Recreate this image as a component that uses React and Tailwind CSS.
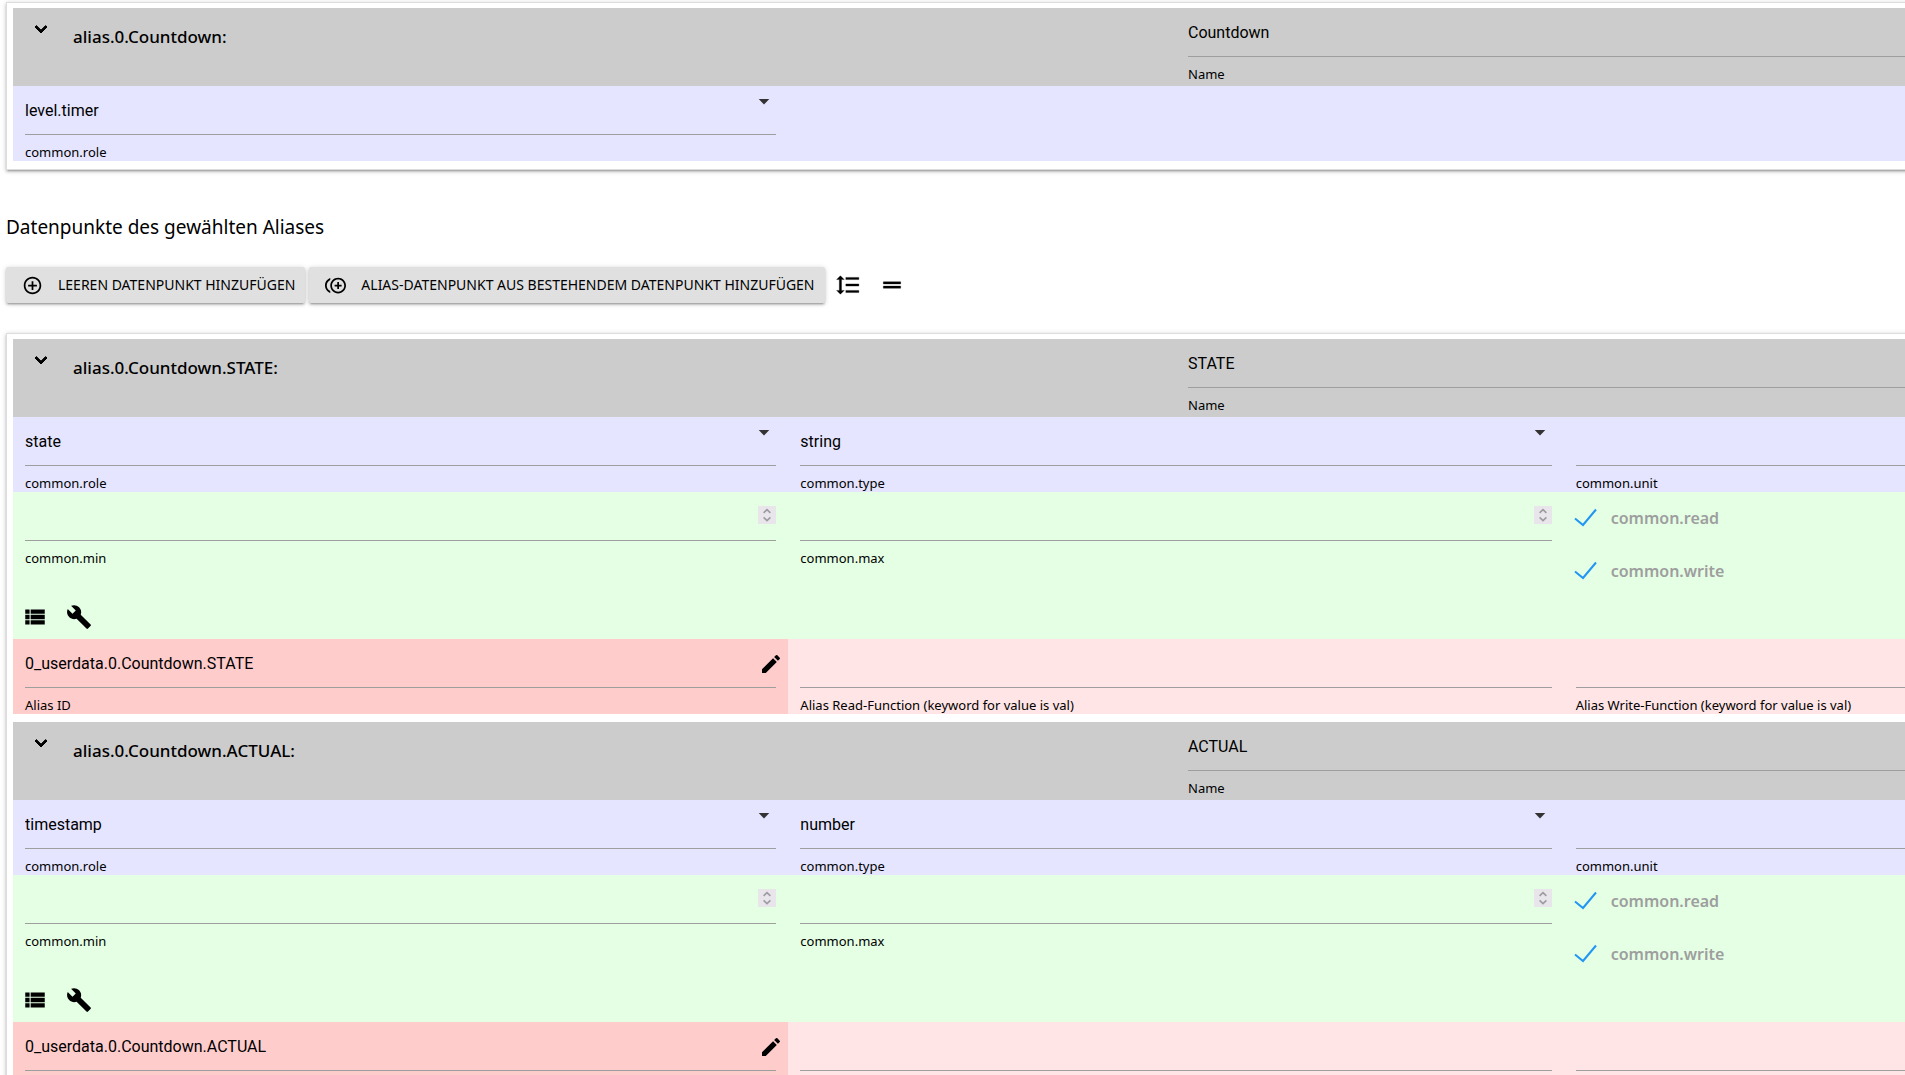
import { useId, useState } from 'react';
import {
  MdAddCircleOutline,
  MdBuild,
  MdControlPointDuplicate,
  MdEdit,
  MdViewList,
} from 'react-icons/md';

const datapoints = [
  { id: 'alias.0.Countdown.STATE', name: 'STATE', role: 'state', type: 'string', aliasId: '0_userdata.0.Countdown.STATE' },
  { id: 'alias.0.Countdown.ACTUAL', name: 'ACTUAL', role: 'timestamp', type: 'number', aliasId: '0_userdata.0.Countdown.ACTUAL' },
];

// Material icons with a heavier outline than the icon package has
const BoldIcon = ({ d, size, weight = 0.8, className }) => (
  <svg
    className={className}
    width={size}
    height={size}
    viewBox="0 0 24 24"
    fill="currentColor"
    stroke="currentColor"
    strokeWidth={weight}
  >
    <path d={d} />
  </svg>
);

const EXPAND_MORE = 'M16.59 8.59 12 13.17 7.41 8.59 6 10l6 6 6-6z';
const LINE_SPACING = 'M6 7h2.5L5 3.5 1.5 7H4v10H1.5L5 20.5 8.5 17H6V7zm4-2v2h12V5H10zm0 14h12v-2H10v2zm0-6h12v-2H10v2z';
const DRAG_HANDLE = 'M20 9H4v2h16V9zM4 15h16v-2H4v2z';

const Field = ({ label, children }) => {
  const id = useId();
  return (
    <div className="px-3">
      <div className="relative">{children(id)}</div>
      <label htmlFor={id} className="block pt-2 text-[13px] leading-[18px] whitespace-nowrap">
        {label}
      </label>
    </div>
  );
};

const inputClass =
  'block h-[49px] w-full appearance-none border-b border-[#9e9e9e] bg-transparent font-[Roboto,sans-serif] text-base outline-none';

const TextField = ({ label, value = '' }) => (
  <Field label={label}>{(id) => <input id={id} type="text" defaultValue={value} className={inputClass} />}</Field>
);

const SelectField = ({ label, value }) => (
  <Field label={label}>
    {(id) => (
      <>
        <select id={id} defaultValue={value} className={`${inputClass} pt-px`}>
          <option>{value}</option>
        </select>
        <svg className="pointer-events-none absolute top-[3px] right-0" width="24" height="24" viewBox="0 0 24 24" fill="#333">
          <path d="M6.7 10h10.6L12 15.5z" />
        </svg>
      </>
    )}
  </Field>
);

const NumberField = ({ label }) => (
  <Field label={label}>
    {(id) => (
      <>
        <input id={id} type="number" className={`${inputClass} [appearance:textfield]`} />
        <svg
          className="pointer-events-none absolute top-3.5 right-0 bg-[#e8e6eb]"
          width="18"
          height="18"
          viewBox="0 0 18 18"
          fill="none"
          stroke="#9d9aa3"
          strokeWidth="1.6"
        >
          <path d="M5.6 6.8 9 3.6l3.4 3.2M5.6 11.4 9 14.6l3.4-3.2" />
        </svg>
      </>
    )}
  </Field>
);

const CheckField = ({ label }) => (
  <label className="flex h-[53px] items-start gap-3 px-2.5 pt-3.5 text-base leading-6 font-semibold text-[#9e9e9e]">
    <span className="relative flex h-6 w-[25px] items-center">
      <input type="checkbox" defaultChecked className="peer h-6 w-full appearance-none outline-none" />
      <svg
        className="pointer-events-none absolute inset-0 hidden peer-checked:block"
        width="25"
        height="24"
        viewBox="0 0 25 24"
        fill="none"
        stroke="#2196f3"
        strokeWidth="2"
      >
        <path d="M1 12.5 9 19 22 3.5" />
      </svg>
    </span>
    {label}
  </label>
);

const ItemHeader = ({ id, name, open, onToggle }) => (
  <div className="grid grid-cols-2 bg-[#cccccc] pb-[3px]">
    <div className="flex items-start gap-5">
      <button type="button" onClick={onToggle} aria-label="Toggle" className="mt-[9px] ml-4">
        <BoldIcon d={EXPAND_MORE} size={24} weight={1} className={open ? '' : '-rotate-90'} />
      </button>
      <span className="pt-[17px] text-[17px] leading-6 font-medium">{id}:</span>
    </div>
    <TextField label="Name" value={name} />
  </div>
);

const Datapoint = ({ id, name, role, type, aliasId }) => {
  const [open, setOpen] = useState(true);
  return (
    <div className="mb-2">
      <ItemHeader id={id} name={name} open={open} onToggle={() => setOpen(!open)} />
      {open && (
        <>
          <div className="grid grid-cols-3 bg-[#e5e5ff]">
            <SelectField label="common.role" value={role} />
            <SelectField label="common.type" value={type} />
            <TextField label="common.unit" />
          </div>
          <div className="bg-[#e5ffe5] pb-[9px]">
            <div className="grid grid-cols-3">
              <NumberField label="common.min" />
              <NumberField label="common.max" />
              <div>
                <CheckField label="common.read" />
                <CheckField label="common.write" />
              </div>
            </div>
            <div className="flex gap-[18px] px-[9px] pt-1.5">
              <button type="button" aria-label="Edit states">
                <MdViewList size={26} />
              </button>
              <button type="button" aria-label="Edit custom settings">
                <MdBuild size={26} />
              </button>
            </div>
          </div>
          <div className="grid grid-cols-3 bg-[#ffe5e5]">
            <div className="relative bg-[#ffcccc]">
              <TextField label="Alias ID" value={aliasId} />
              <button type="button" aria-label="Edit alias id" className="absolute top-[13px] right-[5px]">
                <MdEdit size={24} />
              </button>
            </div>
            <TextField label="Alias Read-Function (keyword for value is val)" />
            <TextField label="Alias Write-Function (keyword for value is val)" />
          </div>
        </>
      )}
    </div>
  );
};

const Panel = ({ children }) => (
  <section className="border border-[#dddddd] bg-white px-1.5 pt-[5px] shadow-[0_2px_2px_0_rgba(0,0,0,0.14),0_3px_1px_-2px_rgba(0,0,0,0.12),0_1px_5px_0_rgba(0,0,0,0.2)]">
    {children}
  </section>
);

const ToolbarButton = ({ icon: Icon, children }) => (
  <button
    type="button"
    className="flex h-9 items-center gap-[15px] rounded-xs bg-[#e0e0e0] pr-2.5 pl-4 text-sm whitespace-nowrap uppercase shadow-[0_2px_2px_0_rgba(0,0,0,0.14),0_3px_1px_-2px_rgba(0,0,0,0.12),0_1px_5px_0_rgba(0,0,0,0.2)]"
  >
    <Icon size={21} />
    {children}
  </button>
);

export default function App() {
  const [open, setOpen] = useState(true);

  return (
    <div className="h-screen overflow-hidden bg-white font-['Noto_Sans',sans-serif] text-black">
      {/* The editor is wider than the window, its right part is cut off */}
      <main className="w-[123.15%] pt-0.5 pl-1.5">
        <Panel>
          <div className="mb-2">
            <ItemHeader id="alias.0.Countdown" name="Countdown" open={open} onToggle={() => setOpen(!open)} />
            {open && (
              <div className="grid grid-cols-3 bg-[#e5e5ff]">
                <SelectField label="common.role" value="level.timer" />
              </div>
            )}
          </div>
        </Panel>

        <h2 className="mt-[43px] text-[19px] leading-7">Datenpunkte des gewählten Aliases</h2>

        <div className="mt-[26px] mb-[30px] flex items-center gap-1">
          <ToolbarButton icon={MdAddCircleOutline}>Leeren Datenpunkt hinzufügen</ToolbarButton>
          <ToolbarButton icon={MdControlPointDuplicate}>Alias-Datenpunkt aus bestehendem Datenpunkt hinzufügen</ToolbarButton>
          <div className="flex gap-[18px] pl-1.5">
            <button type="button" aria-label="Expand all">
              <BoldIcon d={LINE_SPACING} size={26} weight={0.3} />
            </button>
            <button type="button" aria-label="Collapse all">
              <BoldIcon d={DRAG_HANDLE} size={26} weight={0.3} />
            </button>
          </div>
        </div>

        <Panel>
          {datapoints.map((dp) => (
            <Datapoint key={dp.id} {...dp} />
          ))}
        </Panel>
      </main>
    </div>
  );
}
